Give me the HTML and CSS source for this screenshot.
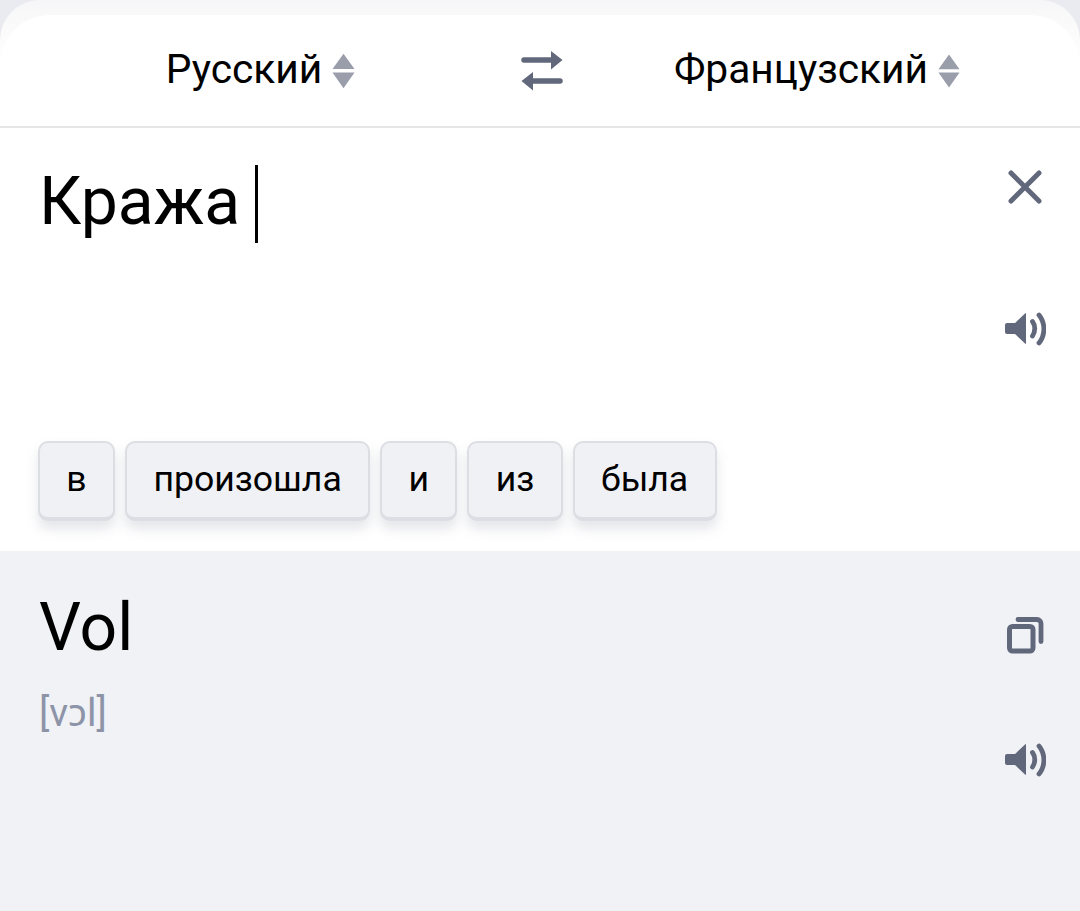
FILE: index.html
```html
<!DOCTYPE html>
<html lang="ru">
<head>
<meta charset="utf-8">
<title>Переводчик</title>
<link rel="stylesheet" href="styles.css">
</head>
<body>
<div class="back-sheet">
  <main class="sheet">
    <header class="lang-bar">
      <div class="lang lang-from">
        <span>Русский</span>
        <svg class="sort" width="23" height="38" viewBox="0 0 24 38"><path d="M12 1 23.500 17H.5zM.5 20.500h23L12 37z"/></svg>
      </div>
      <svg class="swap" width="42" height="40" viewBox="0 0 42 40" fill="none"><path d="M3 9h28" stroke-width="5.500" stroke-linecap="round"/><path class="fill" d="M30 0 41.500 9 30 18.500z"/><path d="M39 30H12" stroke-width="5.500" stroke-linecap="round"/><path class="fill" d="M12 21 .5 30 12 39.500z"/></svg>
      <div class="lang lang-to">
        <span>Французский</span>
        <svg class="sort" width="22" height="38" viewBox="0 0 24 38"><path d="M12 1 23.500 17H.5zM.5 20.500h23L12 37z"/></svg>
      </div>
    </header>
    <section class="input-pane">
      <div class="text-row">
        <div class="source"><span class="source-text">Кража</span><i class="caret"></i></div>
        <div class="tools tools-input">
          <svg class="icon" width="36" height="36" viewBox="0 0 36 36" fill="none"><path d="M4 4l28 28M32 4 4 32" stroke-width="5" stroke-linecap="round"/></svg>
          <svg class="icon" width="42" height="36" viewBox="0 0 42 36" fill="none"><path class="fill" d="M1 14q0-2 2-2h8L21 2.500q1-1 1 .5v29q0 1.500-1 .5L11 23H3q-2 0-2-2z"/><path d="M28.500 10.500c3 4 3 10 0 14.500M35 4c6.500 8 6.500 20 0 28" stroke-width="4.800" stroke-linecap="round"/></svg>
        </div>
      </div>
      <div class="chips">
        <button class="chip">в</button>
        <button class="chip">произошла</button>
        <button class="chip">и</button>
        <button class="chip">из</button>
        <button class="chip">была</button>
      </div>
    </section>
    <section class="output-pane">
      <div class="result">
        <div class="target">Vol</div>
        <div class="phon">[vɔl]</div>
      </div>
      <div class="tools tools-output">
        <svg class="icon" width="38" height="38" viewBox="0 0 38 38" fill="none"><rect x="3.500" y="10.500" width="23.500" height="24.500" rx="3" stroke-width="5"/><path d="M12 3.500h19a4 4 0 0 1 4 4v18" stroke-width="4.800" stroke-linecap="round"/></svg>
        <svg class="icon" width="42" height="36" viewBox="0 0 42 36" fill="none"><path class="fill" d="M1 14q0-2 2-2h8L21 2.500q1-1 1 .5v29q0 1.500-1 .5L11 23H3q-2 0-2-2z"/><path d="M28.500 10.500c3 4 3 10 0 14.500M35 4c6.500 8 6.500 20 0 28" stroke-width="4.800" stroke-linecap="round"/></svg>
      </div>
    </section>
  </main>
</div>
</body>
</html>
```
FILE: styles.css
```css
* { box-sizing: border-box; }
html, body { margin: 0; height: 911px; overflow: hidden; }
body { background: #e9ebf1; font-family: Roboto, "Noto Sans", sans-serif; color: #000; }
.back-sheet { background: linear-gradient(#f6f6f8, #f9f9fa 15px, #fff 70px); border-radius: 40px 40px 0 0; padding-top: 15px; height: 911px; }
.sheet { background: #fff; border-radius: 50px 50px 0 0; height: 896px; display: flex; flex-direction: column; overflow: hidden; }
.lang-bar { display: flex; align-items: center; height: 113px; border-bottom: 2px solid #e5e6e8; flex: none; }
.lang { display: flex; align-items: center; justify-content: center; gap: 10px; font-size: 40.700px; line-height: 48px; }
.lang span { margin-top: -4px; }
.lang-from { width: 521px; }
.lang-to { flex: 1; padding-right: 9px; }
.sort { fill: #9a9eab; }
.swap { stroke: #62687c; flex: none; }
.fill { fill: #62687c; stroke: none; }
.icon { stroke: #62687c; display: block; flex: none; }
.input-pane { height: 423px; background: #fff; display: flex; flex-direction: column; justify-content: space-between; padding: 37px 34px 30px 38px; flex: none; }
.text-row { display: flex; justify-content: space-between; }
.source { font-size: 66px; line-height: 74px; display: flex; padding-left: 1px; }
.caret { display: block; width: 3px; height: 78px; background: #000; margin-left: 15px; }
.tools { display: flex; flex-direction: column; align-items: center; }
.tools-input { gap: 106px; padding-top: 4px; }
.chips { display: flex; gap: 10px; }
.chip { font: 400 35.600px/38px Roboto, sans-serif; color: #000; background: #f0f1f5; border: 2px solid #dcdee3; border-bottom-width: 4px; border-radius: 10px; height: 80px; padding: 0 26.350px 2px; box-shadow: 0 8px 12px rgba(150, 155, 170, .25); }
.output-pane { flex: 1; background: #f0f2f6; display: flex; justify-content: space-between; padding: 38px 34px 0 39px; }
.target { font-size: 66px; line-height: 78px; }
.phon { font-size: 39px; line-height: 48px; color: #8d94a8; margin-top: 22px; }
.tools-output { gap: 88px; padding-top: 27px; }
```
